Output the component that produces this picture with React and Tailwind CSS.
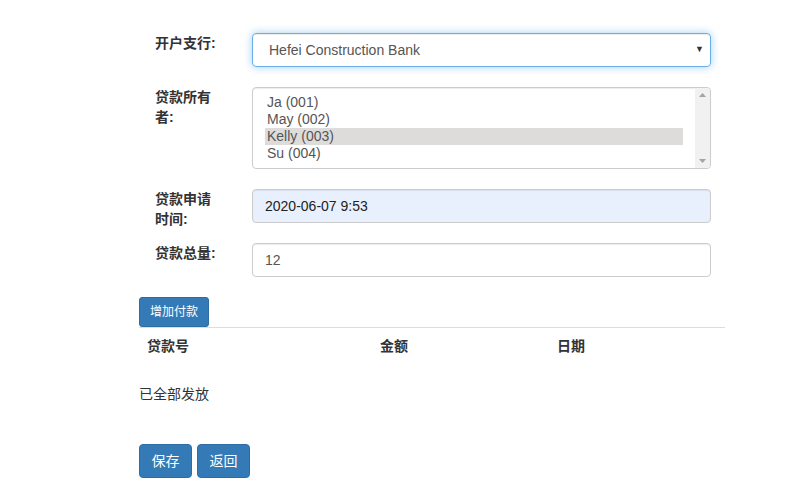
import React from "react";

const font = { fontFamily: '"Liberation Sans", Arial, "Noto Sans CJK SC", sans-serif' };

function Row({ label, children }) {
  return (
    <div className="flex items-start">
      <div className="h-[34px] w-[113px] shrink-0 pl-[16px]">
        <div className="w-[68px] font-bold text-[14px] leading-[20px] text-[#333]">{label}</div>
      </div>
      <div className="w-[459px]">{children}</div>
    </div>
  );
}

export default function App() {
  const owners = ["Ja (001)", "May (002)", "Kelly (003)", "Su (004)"];
  return (
    <div style={font} className="min-h-[495px] w-[808px] bg-white text-[14px] text-[#333]">
      <div className="pl-[139px] pt-[33px] w-[725px]">
        <div className="flex flex-col gap-[20px]">
          <Row label="开户支行:">
            <div className="relative flex h-[34px] items-center rounded-[4px] border border-[#66afe9] pl-[16px] text-[#555] shadow-[inset_0_1px_1px_rgba(0,0,0,0.075),0_0_8px_rgba(102,175,233,0.6)]">
              Hefei Construction Bank
              <span className="absolute right-[6px] top-[9px] text-[9px] text-[#333]">▼</span>
            </div>
          </Row>
          <Row label="贷款所有者:">
            <div className="flex h-[82px] overflow-hidden rounded-[4px] border border-[#ccc] shadow-[inset_0_1px_1px_rgba(0,0,0,0.075)]">
              <div className="flex-1 px-[12px] pt-[6px]">
                {owners.map((o, i) => (
                  <div
                    key={o}
                    className={
                      "h-[17px] px-[2px] leading-[17px] text-[#555] " +
                      (i === 2 ? "bg-[#dedcdb]" : "")
                    }
                  >
                    {o}
                  </div>
                ))}
              </div>
              <div className="flex w-[15px] flex-col items-center justify-between bg-[#f1f1f1] py-[5px]">
                <svg width="7" height="4" viewBox="0 0 7 4"><path d="M3.5 0L7 4H0z" fill="#a3a3a3" /></svg>
                <svg width="7" height="4" viewBox="0 0 7 4"><path d="M0 0H7L3.5 4z" fill="#a3a3a3" /></svg>
              </div>
            </div>
          </Row>
          <Row label="贷款申请时间:">
            <div className="flex h-[34px] items-center rounded-[4px] border border-[#ccc] bg-[#e8f0fe] px-[12px] text-[#222] shadow-[inset_0_1px_1px_rgba(0,0,0,0.075)]">
              2020-06-07 9:53
            </div>
          </Row>
          <Row label="贷款总量:">
            <div className="flex h-[34px] items-center rounded-[4px] border border-[#ccc] px-[12px] text-[#555] shadow-[inset_0_1px_1px_rgba(0,0,0,0.075)]">
              12
            </div>
          </Row>
        </div>

        <div className="mt-[20px] w-[586px]">
          <button className="h-[30px] rounded-[3px] border border-[#2e6da4] bg-[#337ab7] px-[10px] text-[12px] leading-[18px] text-white">
            增加付款
          </button>
          <div className="flex border-t border-[#ddd] font-bold">
            <div className="w-[233px] px-[8px] py-[8px] leading-[20px]">贷款号</div>
            <div className="w-[177px] px-[8px] py-[8px] leading-[20px]">金额</div>
            <div className="flex-1 px-[8px] py-[8px] leading-[20px]">日期</div>
          </div>
          <div className="mt-[20px] leading-[20px]">已全部发放</div>
          <div className="mt-[40px] flex gap-[5px]">
            <button className="h-[34px] w-[53px] rounded-[4px] border border-[#2e6da4] bg-[#337ab7] text-[14px] leading-[20px] text-white">
              保存
            </button>
            <button className="h-[34px] w-[53px] rounded-[4px] border border-[#2e6da4] bg-[#337ab7] text-[14px] leading-[20px] text-white">
              返回
            </button>
          </div>
        </div>
      </div>
    </div>
  );
}
